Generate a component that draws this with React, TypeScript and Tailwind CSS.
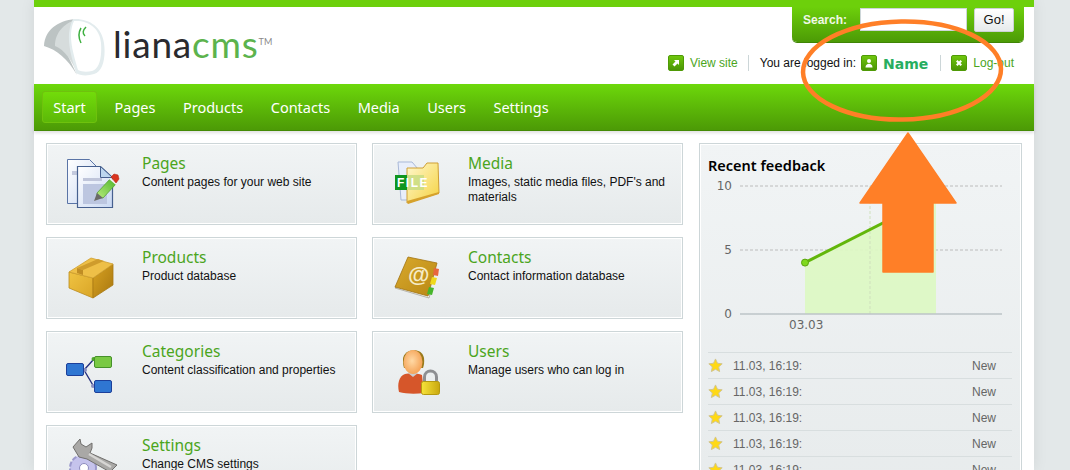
import type { ReactNode } from 'react'

const navItems = ['Start', 'Pages', 'Products', 'Contacts', 'Media', 'Users', 'Settings']

function PagesIcon() {
  return (
    <svg width="56" height="56" viewBox="0 0 56 56">
      <defs>
        <linearGradient id="pg" x1="0" y1="0" x2="1" y2="1">
          <stop offset="0" stopColor="#ffffff" />
          <stop offset="1" stopColor="#c9d8f2" />
        </linearGradient>
        <linearGradient id="pen" x1="0" y1="1" x2="1" y2="0">
          <stop offset="0" stopColor="#b7ec7c" />
          <stop offset="1" stopColor="#4fb52b" />
        </linearGradient>
      </defs>
      <path d="M1.500 1.500h22l11 11v33h-33z" fill="url(#pg)" stroke="#5a74a6" />
      <path d="M6 13h22v4H6z" fill="#c3c9dd" />
      <path d="M11.500 8.500h23l12 11v30h-35z" fill="url(#pg)" stroke="#46608f" strokeWidth="1.200" />
      <path d="M34.500 8.500v11h12z" fill="#bcd6ee" stroke="#46608f" />
      <path d="M17 20h19v3H17z" fill="#bfc5da" />
      <path d="M17 26h24v20H17z" fill="#bcc6e0" />
      <path d="M31 35l13-14 6 5-13 14-6-1z" fill="url(#pen)" stroke="#4b9a2a" strokeWidth="0.700" />
      <path d="M28 43l3-8 6 5z" fill="#6a6a66" />
      <path d="M43 21l2-1 6 5-1 2z" fill="#f3f3f3" />
      <path d="M45 19l3-3 4 1 1 4-3 4z" fill="#d9351f" stroke="#b72a18" strokeWidth="0.600" />
    </svg>
  )
}

function BoxIcon() {
  return (
    <svg width="56" height="56" viewBox="0 0 56 56">
      <defs>
        <linearGradient id="bx" x1="0" y1="0" x2="1" y2="1">
          <stop offset="0" stopColor="#f0c342" />
          <stop offset="1" stopColor="#d9a527" />
        </linearGradient>
        <linearGradient id="bx2" x1="0" y1="0" x2="1" y2="1">
          <stop offset="0" stopColor="#d9a322" />
          <stop offset="1" stopColor="#a8770f" />
        </linearGradient>
      </defs>
      <path d="M3 20l24 6v20L3 36z" fill="url(#bx)" stroke="#ba8a1d" strokeWidth="0.800" />
      <path d="M27 26l20-14v21L27 46z" fill="url(#bx2)" stroke="#a87a15" strokeWidth="0.800" />
      <path d="M3 20L25 6l22 6-20 14z" fill="#eebf47" stroke="#cf9f2e" strokeWidth="0.800" />
      <path d="M11 16l21-9 6 2-21 9z" fill="#cf9c2c" />
      <path d="M11 16l6 2v5l-6-2z" fill="#c08d24" />
    </svg>
  )
}

function TreeIcon() {
  return (
    <svg width="56" height="56" viewBox="0 0 56 56">
      <path d="M18 24l10-11M18 24l10 17" stroke="#27317f" strokeWidth="1.400" fill="none" />
      <circle cx="27.500" cy="13" r="2" fill="#4fa52a" />
      <circle cx="27" cy="40" r="2" fill="#8a8fc0" />
      <circle cx="19" cy="24" r="2" fill="#8a8fc0" />
      <rect x="0.500" y="17.500" width="17" height="12" rx="1.500" fill="#2f76d2" stroke="#1c3f9a" />
      <rect x="28.500" y="10.500" width="17" height="11" rx="1.500" fill="#79c943" stroke="#46912a" />
      <rect x="28.500" y="34.500" width="17" height="12" rx="1.500" fill="#2f76d2" stroke="#1c3f9a" />
    </svg>
  )
}

function WrenchIcon() {
  return (
    <svg width="56" height="56" viewBox="0 0 56 56" className="overflow-visible">
      <circle cx="17" cy="28" r="13" fill="#c5c3ec" stroke="#9b99cc" strokeWidth="2" strokeDasharray="5 2" />
      <circle cx="18" cy="28" r="4.500" fill="#ffffff" stroke="#8d8bbd" />
      <path d="M7 7l7-8 1 5 5 3 6-4 0 5-2 5 27 12-7 7-23-13-8-2z" fill="#a9a8a6" stroke="#706f6d" />
      <path d="M23 14l22 13" stroke="#d6d5d3" strokeWidth="2.500" />
    </svg>
  )
}

function MediaIcon() {
  return (
    <svg width="56" height="56" viewBox="0 0 56 56">
      <defs>
        <linearGradient id="fd" x1="0" y1="0" x2="1" y2="1">
          <stop offset="0" stopColor="#fff8cf" />
          <stop offset="1" stopColor="#f5d23f" />
        </linearGradient>
      </defs>
      <path d="M6 4h14l6 7v31H9z" fill="#e8eefb" stroke="#a9b9d8" />
      <path d="M15 10h16l4-5h11l1 30-32 10z" fill="url(#fd)" stroke="#cf9f34" />
      <path d="M15 43l32-9v2L16 46z" fill="#d6a22c" />
      <rect x="3" y="17" width="12" height="15" fill="#0f9620" />
      <rect x="15" y="17" width="17" height="15" fill="#c6dc82" opacity="0.800" />
      <text x="5" y="29" fontFamily="Liberation Sans" fontSize="12" fontWeight="700" fill="#ffffff" letterSpacing="1.500">FILE</text>
    </svg>
  )
}

function BookIcon() {
  return (
    <svg width="56" height="56" viewBox="0 0 56 56">
      <defs>
        <linearGradient id="bk" x1="0" y1="0" x2="1" y2="1">
          <stop offset="0" stopColor="#d9a92c" />
          <stop offset="1" stopColor="#b98815" />
        </linearGradient>
      </defs>
      <path d="M3 36l34 10 1-3-33-10z" fill="#f1f1ec" stroke="#a7a49b" strokeWidth="0.800" />
      <path d="M16 5l29 6-9 33L3 35z" fill="url(#bk)" stroke="#a27412" strokeWidth="0.800" />
      <path d="M42 16l5 1-1 7-5-1z" fill="#e8673e" />
      <path d="M40 25l5 1-2 7-5-1z" fill="#efd91b" />
      <path d="M37 35l5 1-2 7-5-1z" fill="#47b52b" />
      <text x="16" y="30" fontFamily="Liberation Sans" fontSize="22" fontWeight="700" fill="#f6ecc8">@</text>
    </svg>
  )
}

function UserIcon() {
  return (
    <svg width="56" height="56" viewBox="0 0 56 56">
      <defs>
        <radialGradient id="fc" cx="0.450" cy="0.450" r="0.650">
          <stop offset="0" stopColor="#ffd9a5" />
          <stop offset="1" stopColor="#f39a4a" />
        </radialGradient>
        <linearGradient id="lk" x1="0" y1="0" x2="1" y2="0">
          <stop offset="0" stopColor="#f7e33a" />
          <stop offset="1" stopColor="#c9a80f" />
        </linearGradient>
      </defs>
      <path d="M7 46c-2-8 0-16 6-18 4-1 13-1 17 1l2 18c-8 1-18 1-25-1z" fill="#d6562a" />
      <path d="M16 27h10l-5 4z" fill="#c9cdd0" />
      <path d="M11 13C11 3 30 0 32 12c.5 4 0 7-1 10H12c-1-3-1-6-1-9z" fill="#9a7a1a" />
      <ellipse cx="21" cy="16" rx="9.500" ry="12" fill="url(#fc)" />
      <path d="M32.500 36v-5c0-8 12-8 12 0v5" fill="none" stroke="#8d8f92" strokeWidth="3" />
      <rect x="29.500" y="35.500" width="18" height="13" rx="2" fill="url(#lk)" stroke="#b59a10" />
    </svg>
  )
}

function GreenBadge({ children }: { children: ReactNode }) {
  return (
    <span className="flex h-4 w-4 items-center justify-center rounded-[2px] border border-[#4f9a06] bg-gradient-to-b from-[#6fc70d] to-[#4b9506]">
      <svg width="10" height="10" viewBox="0 0 10 10" fill="#ffffff">{children}</svg>
    </span>
  )
}

function Card({ title, text, icon }: { title: string; text: string; icon: ReactNode }) {
  return (
    <div className="flex h-[82px] w-[311px] border border-[#cdd6d8] bg-gradient-to-b from-[#f1f4f5] to-[#e6eaeb] shadow-[inset_0_0_0_1px_#ffffff]">
      <div className="w-[95px] shrink-0 pl-[19px] pt-[14px]">{icon}</div>
      <div className="pt-[9px] pr-2">
        <div className="font-['Noto_Sans'] text-[15.5px] leading-[20px] text-[#4ba51c]">{title}</div>
        <div className="mt-[2px] text-xs leading-[15px] text-[#111111]">{text}</div>
      </div>
    </div>
  )
}

function StarIcon() {
  return (
    <svg width="15" height="15" viewBox="0 0 16 16">
      <path d="M8 1l2.100 4.600 5 .6-3.700 3.300 1 5L8 12l-4.400 2.500 1-5L.9 6.200l5-.6z" fill="#ffd915" stroke="#cfc390" />
    </svg>
  )
}

function FeedbackChart() {
  return (
    <svg width="305" height="160" viewBox="0 0 305 160" className="mt-[5px] block">
      <path d="M32 6h262M32 70h262" stroke="#bcbcbc" strokeDasharray="3 2" />
      <path d="M97 82.600L228 16v118H97z" fill="#ddf8c4" opacity="0.950" />
      <path d="M162 6v128" stroke="#cfe0bd" strokeDasharray="3 2" />
      <path d="M32 134h262" stroke="#bcc5c7" strokeWidth="1.500" />
      <path d="M97 82.600L228 16" stroke="#62b60a" strokeWidth="3" fill="none" />
      <circle cx="97" cy="82.600" r="3.500" fill="#7fd91c" stroke="#5aa30d" />
      <g fontFamily="DejaVu Sans" fontSize="12" fill="#666666" textAnchor="end">
        <text x="24" y="10">10</text>
        <text x="24" y="74">5</text>
        <text x="24" y="138">0</text>
      </g>
      <text x="81" y="149" fontFamily="DejaVu Sans" fontSize="12" fill="#666666">03.03</text>
    </svg>
  )
}

export default function App() {
  return (
    <div className="relative h-[470px] w-[1070px] overflow-hidden bg-[#e3e8e9] pl-[34px] font-['Liberation_Sans',Arial,sans-serif]">
      <div className="h-full w-[1000px] bg-white shadow-[0_0_14px_rgba(0,0,0,0.08)]">
        {/* top strip and header */}
        <div className="h-[7px] bg-[#6dd00b]" />
        <div className="flex h-[77px] justify-between">
          <div className="flex pl-[9px] pt-[11px]">
            <svg width="62" height="58" viewBox="0 0 62 58">
              <path d="M1 28C2 12 14 3 32 1 22 8 20 24 26 40l8 17C24 40 14 32 1 28z" fill="#bcc3c3" />
              <path d="M12 28C12 14 22 4 36 1 28 10 26 24 30 40l5 16C28 42 22 32 12 28z" fill="#d6dcdc" />
              <path d="M30 1c16-1 29 8 31 24 2 14-1 29-10 31-6 2-14 2-18-1-4-16-12-36-3-54z" fill="#e3ecee" />
              <path d="M31 3c14-1 26 7 27 22 1 13-1 26-9 28-5 1-10 1-14-1-4-15-11-34-4-49z" fill="#ffffff" />
              <path d="M38 10c-3 5-3 9 0 15M43 9c-3 3-4 6-1 9" stroke="#3fb040" strokeWidth="1.500" fill="none" />
            </svg>
            <div className="ml-2 mt-1 flex items-start font-['Lato'] text-[37px] leading-[44px] tracking-[0.8px]">
              <span className="text-[#2a2a2e]">liana</span>
              <span className="text-[#5cb34d]">cms</span>
              <span className="mt-[15px] text-[9px] leading-[10px] tracking-normal text-[#8a8a8a]">TM</span>
            </div>
          </div>
          <div className="flex flex-col items-end pr-[10px]">
            <div className="flex h-[35px] w-[232px] items-start rounded-b-[5px] bg-gradient-to-b from-[#6dd00b] to-[#4c9a06] pl-[11px] pt-px shadow-[0_1px_0_#3f8505]">
              <span className="mt-[4px] text-xs font-bold text-[#f1f8e6]">Search:</span>
              <div className="ml-[13px] h-[23px] w-[107px] border border-[#cdd6d8] bg-white" />
              <button className="ml-[7px] h-6 w-10 rounded-[2px] border border-[#ccd2d4] bg-gradient-to-b from-white to-[#e6eaeb] text-[13px] text-[#111111]">
                Go!
              </button>
            </div>
            <div className="mt-[13px] flex h-4 items-center pr-[10px] text-xs text-[#111111]">
              <GreenBadge>
                <path d="M3 2h5v5L6.500 5.500 3.500 8.500 1.500 6.500 4.500 3.500z" />
              </GreenBadge>
              <span className="ml-[6px] text-[#4ba51c]">View site</span>
              <span className="ml-[10px] mr-[11px] h-4 w-px bg-[#ccd6d8]" />
              <span>You are logged in:</span>
              <span className="ml-[5px]">
                <GreenBadge>
                  <circle cx="5" cy="3" r="2" />
                  <path d="M1.500 9.500c0-5 7-5 7 0z" />
                </GreenBadge>
              </span>
              <span className="ml-[6px] mt-px font-['DejaVu_Sans'] text-sm font-bold text-[#27ae60]">Name</span>
              <span className="ml-[12px] mr-[10px] h-4 w-px bg-[#ccd6d8]" />
              <GreenBadge>
                <path d="M2 3.500L3.500 2 5 3.500 6.500 2 8 3.500 6.500 5 8 6.500 6.500 8 5 6.500 3.500 8 2 6.500 3.500 5z" />
              </GreenBadge>
              <span className="ml-[6px] text-[#4ba51c]">Log-out</span>
            </div>
          </div>
        </div>

        {/* main nav */}
        <nav className="flex h-[47px] items-center gap-[7.5px] border-b border-[#438a05] bg-gradient-to-b from-[#6dd80b] to-[#4c9a06] pl-2 font-['Noto_Sans'] text-[14.5px] text-white shadow-[0_2px_3px_rgba(0,0,0,0.12)]">
          {navItems.map((item, i) => (
            <span
              key={item}
              className={i === 0 ? 'w-[55px] rounded-[3px] border border-[#6fc20d] bg-gradient-to-b from-[#72dc0a] to-[#5cb808] py-[5px] text-center leading-[20px]' : 'px-[10px] leading-[20px]'}
            >
              {item}
            </span>
          ))}
        </nav>

        <div className="flex pl-3 pt-3">
          <div className="grid w-[637px] shrink-0 grid-cols-[311px_311px] content-start gap-x-[15px] gap-y-3">
            <Card title="Pages" text="Content pages for your web site" icon={<PagesIcon />} />
            <Card title="Media" text="Images, static media files, PDF's and materials" icon={<MediaIcon />} />
            <Card title="Products" text="Product database" icon={<BoxIcon />} />
            <Card title="Contacts" text="Contact information database" icon={<BookIcon />} />
            <Card title="Categories" text="Content classification and properties" icon={<TreeIcon />} />
            <Card title="Users" text="Manage users who can log in" icon={<UserIcon />} />
            <Card title="Settings" text="Change CMS settings" icon={<WrenchIcon />} />
          </div>

          {/* feedback panel */}
          <div className="ml-4 h-[400px] w-[323px] shrink-0 border border-[#cdd6d8] bg-gradient-to-b from-[#f1f4f5] to-[#e6eaeb] pl-2 pr-[9px] pt-[11px] shadow-[inset_0_0_0_1px_#ffffff]">
            <div className="font-['Noto_Sans'] text-[14.5px] font-semibold leading-[20px] text-black">Recent feedback</div>
            <FeedbackChart />
            <div className="mt-3 border-b border-[#d8dedf]">
              {[0, 1, 2, 3, 4].map((i) => (
                <div key={i} className="flex h-[26px] items-center border-t border-t-[#d8dedf] pr-4 text-xs text-[#666666]">
                  <StarIcon />
                  <span className="ml-[10px]">11.03, 16:19:</span>
                  <span className="ml-auto">New</span>
                </div>
              ))}
            </div>
          </div>
        </div>
      </div>

      {/* annotation drawn over the page */}
      <svg width="1070" height="470" viewBox="0 0 1070 470" className="pointer-events-none absolute left-0 top-0">
        <ellipse cx="902" cy="70.500" rx="99" ry="49" fill="none" stroke="#ff7f27" strokeWidth="4.500" transform="rotate(-1 902 70)" />
        <path d="M908 133l48 70h-23v69h-50v-69h-23z" fill="#ff7f27" stroke="#ff7f27" strokeWidth="1.500" strokeLinejoin="round" />
      </svg>
    </div>
  )
}
